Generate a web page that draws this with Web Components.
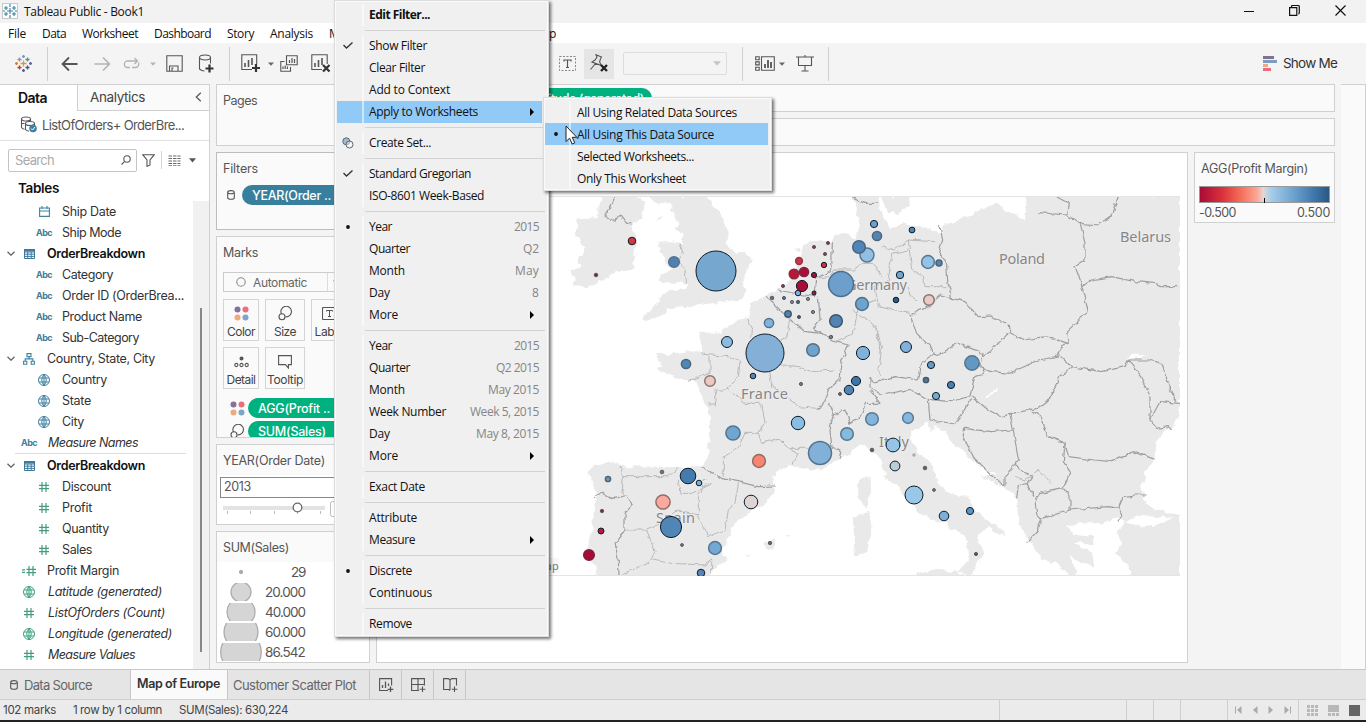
<!DOCTYPE html>
<html lang="en">
<head>
<meta charset="utf-8">
<title>Tableau Public - Book1</title>
<style>
html,body{margin:0;padding:0;width:1366px;height:722px;overflow:hidden;background:#f4f4f4}
</style>
</head>
<body>
<tableau-app></tableau-app>
<script>
const S='fill="none" stroke="#555" stroke-width="1.1"';
const ICONS={
app:[16,16,`<rect x=".5" y=".5" width="15" height="15" fill="#fbfdfe" stroke="#c9c9c9"/><path d="M8 5v6M5 8h6M4 3v4M2 5h4M12 3v4M10 5h4M4 9v4M2 11h4M12 9v4M10 11h4M8 1v3M8 12v3M1 8h2M13 8h2" stroke="#3f7f9f" stroke-width="1.1"/>`],
logo:[17,17,`<g stroke-width="1.3"><path d="M8.500 5.500v6M5.500 8.500h6" stroke="#eb912b"/><path d="M4.500 2.500v4M2.500 4.500h4" stroke="#7f95b5"/><path d="M12.500 2.500v4M10.500 4.500h4" stroke="#59879b"/><path d="M4.500 10.500v4M2.500 12.500h4" stroke="#b5364a"/><path d="M12.500 10.500v4M10.500 12.500h4" stroke="#3b5a86"/><path d="M8.500 0v3M7 1.500h3" stroke="#7b9ac0"/><path d="M8.500 14v3M7 15.500h3" stroke="#5a5b8c"/><path d="M1.500 7v3M0 8.500h3" stroke="#e8762d"/><path d="M15.500 7v3M14 8.500h3" stroke="#5b6591"/></g>`],
back:[18,16,`<path d="M16.500 8H2M8 1.500 1.500 8 8 14.500" fill="none" stroke="#555" stroke-width="1.8"/>`],
fwd:[18,16,`<path d="M1.500 8H16M10 1.500 16.500 8 10 14.500" fill="none" stroke="#b2b2b2" stroke-width="1.6"/>`],
redo:[20,14,`<path d="M8 10.500H4.500a3.500 3.500 0 0 1 0-6.500H15M12.500 1l3 3-3 3M16.500 5.500a3.500 3.500 0 0 1-3 5H10" fill="none" stroke="#b2b2b2" stroke-width="1.300"/>`],
tri:[6,4,`<path d="M0 .5h6L3 3.800Z" fill="#666"/>`],
trig:[6,4,`<path d="M0 .5h6L3 3.800Z" fill="#b5b5b5"/>`],
tril:[8,5,`<path d="M0 .3h8L4 4.700Z" fill="#c6c6c6"/>`],
trib:[7,5,`<path d="M0 .3h7L3.500 4.500Z" fill="#555"/>`],
save:[17,17,`<g ${S}><path d="M.8.8h15.400v15.400H.8Z"/><path d="M3.500 16v-5h8.500v5M6 16v-3h1.500"/></g>`],
dbplus:[17,19,`<g ${S}><ellipse cx="7" cy="3.500" rx="5.500" ry="2.500"/><path d="M1.500 3.500v11.500q2 2 5 2M12.500 3.500v6"/></g><path d="M11.500 10.500v8M7.500 14.500h8" stroke="#333" stroke-width="2.200"/>`],
sheetplus:[20,19,`<g ${S}><path d="M11 15.500H.8V.8h14.900V10"/></g><path d="M4 13V9M7.500 13V6M11 11V4" stroke="#555" stroke-width="1.600"/><path d="M15 10v8M11 14h8" stroke="#333" stroke-width="2.200"/>`],
dup:[18,17,`<g ${S}><path d="M6.500.8h10.700v9H6.500ZM4.500 6.500H.8v9.700h9.700V12"/></g><path d="M9.500 8V5M12 8V3M14.500 8V4M3 14v-2.500M5.200 14v-3.500M7.400 14v-2.500" stroke="#555" stroke-width="1.200"/>`],
clear:[20,19,`<g ${S}><path d="M11 15.500H.8V.8h15.400V10"/></g><path d="M4 13V9M7.500 13V6M11 11V4" stroke="#555" stroke-width="1.600"/><path d="m12 11 6.500 6.500M18.500 11 12 17.500" stroke="#333" stroke-width="2.200"/>`],
tbox:[17,15,`<rect x=".5" y=".5" width="16" height="14" fill="none" stroke="#888" stroke-dasharray="2 1.500"/><path d="M5 5.500V4h7v1.500M8.500 4v7.500M7 11.500h3" fill="none" stroke="#555" stroke-width="1.200"/>`],
pin:[20,19,`<path d="M7 .8 12.500 3l-1 1.600L10.600 8l1.800 3.600L3 8l3-2L8 3.200ZM6.500 9.500 1.500 15.500" ${S} stroke-width="1.300"/><path d="m12 11 6 6M18 11l-6 6" stroke="#222" stroke-width="2.400"/>`],
showc:[20,15,`<g ${S}><path d="M6.500.7h12.800v13.500H6.500ZM.7.700h3.500v3H.7ZM.7 5.900h3.500v3H.7ZM.7 11.200h3.500v3H.7Z"/></g><path d="M10 12V8M13 12V4M16 12V6" stroke="#555" stroke-width="1.800"/>`],
present:[18,17,`<g ${S} stroke-width="1.300"><path d="M0 2h18M9 0v2M2.500 2v8.500h13V2M9 10.500V16M5.500 16h7"/></g>`],
showme:[14,16,`<path d="M0 0h11v3H0Z" fill="#82718f"/><path d="M0 4h14v3H0Z" fill="#7c9cc3"/><path d="M0 8h5v3H0Z" fill="#eeaa84"/><path d="M0 12h8v3H0Z" fill="#ea6d7d"/>`],
ds:[18,17,`<g ${S} stroke="#777"><ellipse cx="6" cy="3" rx="4.500" ry="2"/><path d="M1.500 3v8.500q1 1.500 3 1.700M10.500 3v2M1.500 7.500h3"/><ellipse cx="10" cy="7.500" rx="4.500" ry="2"/><path d="M5.500 7.500v6q1 1.500 3.500 1.700M14.500 7.500v2"/></g><circle cx="13" cy="12.500" r="3.800" fill="#3b82a6"/><path d="m11 12.500 1.500 1.500 2.500-3" fill="none" stroke="#fff"/>`],
search:[10,10,`<circle cx="6" cy="4" r="3.200" ${S}/><path d="M3.700 6.300.5 9.500" ${S} stroke-width="1.500"/>`],
funnel:[13,13,`<path d="M.7.700h11.600L8 6v5L5 12.400V6Z" ${S}/>`],
list:[13,11,`<path d="M.5 1h12M.5 3.500h12M.5 6h12M.5 8.500h12M.5 10.800h12" stroke="#666" stroke-dasharray="3.500 1"/>`],
chev:[8,5,`<path d="m.5.7 3.500 3.500L7.500.7" fill="none" stroke="#666" stroke-width="1.300"/>`],
chevl:[7,10,`<path d="M5.800.7 1.300 5l4.500 4.300" fill="none" stroke="#555" stroke-width="1.200"/>`],
cal:[11,11,`<path d="M.6 2h9.800v8.400H.6ZM.6 5h9.800M3 0v3M8 0v3" fill="none" stroke="#3f82a2" stroke-width="1.100"/>`],
tbl:[11,10,`<path d="M.5.500h10v9H.5ZM.5 3h10M.5 5.200h10M.5 7.400h10M3.700 3v6.500M7.200 3v6.500" fill="none" stroke="#3f7a9c"/><path d="M0 0h11v2.500H0Z" fill="#3f7a9c"/>`],
hier:[12,12,`<path d="M4 .6h4v3H4ZM.6 8.300h3.200v3H.6ZM8.200 8.300h3.200v3H8.200ZM6 3.600v2.300M2.200 8.300V5.900h7.600v2.400" fill="none" stroke="#3f82a2" stroke-width="1.100"/>`],
globe:[12,12,`<path d="M.5 6a5.500 5.500 0 1 0 11 0A5.500 5.500 0 1 0 .5 6M1 4h10M1 8h10M6 .5v11M6 .5Q1.500 6 6 11.500M6 .5Q10.500 6 6 11.500" fill="none" stroke="#3f82a2"/>`],
globeg:[12,12,`<path d="M.5 6a5.500 5.500 0 1 0 11 0A5.500 5.500 0 1 0 .5 6M1 4h10M1 8h10M6 .5v11M6 .5Q1.500 6 6 11.500M6 .5Q10.500 6 6 11.500" fill="none" stroke="#3da37e"/>`],
hash:[10,10,`<path d="M3 0v10M7 0v10M0 3.300h10M0 6.700h10" stroke="#439d7c" stroke-width="1.200"/>`],
eqhash:[14,10,`<path d="M7 0v10M11 0v10M4.500 3.300h9.500M4.500 6.700h9.500M0 3.800h3M0 6.300h3" stroke="#439d7c" stroke-width="1.200"/>`],
cyl:[8,10,`<path d="M.7 2.200a3.300 1.600 0 1 0 6.600 0 3.300 1.600 0 1 0-6.600 0v5.600q0 1.500 3.300 1.500t3.300-1.500V2.200" ${S}/>`],
ring:[10,10,`<circle cx="5" cy="5" r="4.200" fill="none" stroke="#888" stroke-width="1.100"/>`],
dots:[15,15,`<circle cx="3.500" cy="3.500" r="3" fill="#85719b"/><circle cx="11.500" cy="3.500" r="3" fill="#ee6d7c"/><circle cx="3.500" cy="11.500" r="3" fill="#eeaa7c"/><circle cx="11.500" cy="11.500" r="3" fill="#7ca5c7"/>`],
size:[15,15,`<g ${S} stroke="#777"><path d="M3.500 8a5.300 5.300 0 1 1 4 2.800"/><circle cx="4" cy="10.700" r="3"/></g>`],
label:[15,13,`<rect x=".5" y=".5" width="14" height="12" rx="1" ${S}/><path d="M4.500 4.500V3.500h6v1M7.500 3.500v6M6 9.500h3" fill="none" stroke="#555"/>`],
detail:[15,12,`<circle cx="7.500" cy="2.500" r="2" fill="#555"/><g ${S} stroke-width=".9"><circle cx="2.300" cy="9" r="1.600"/><circle cx="7.500" cy="9" r="1.600"/><circle cx="12.700" cy="9" r="1.600"/></g>`],
tip:[14,14,`<path d="M.6.600h12.800v9h-3V13L7.500 9.600H.6Z" ${S}/>`],
check:[10,7,`<path d="m.5 3 3 3L9.500.500" fill="none" stroke="#333" stroke-width="1.300"/>`],
bullet:[4,4,`<circle cx="2" cy="2" r="1.900" fill="#111"/>`],
sets:[12,12,`<circle cx="4.300" cy="4.300" r="3.500" fill="#a7b8c8" stroke="#566a7c"/><circle cx="7.500" cy="7.500" r="3.500" fill="#fff" fill-opacity=".45" stroke="#566a7c"/>`],
sub:[4,8,`<path d="M0 0v8l4-4Z" fill="#000"/>`],
nsheet:[15,14,`<path d="M9 12.500H.6V.600h12v7" ${S}/><path d="M3.500 10V7M6.500 10V3.500M9.500 8V5.500M11.500 8.500v5.500M8.700 11.300h5.600" stroke="#555" stroke-width="1.300"/>`],
ndash:[15,14,`<path d="M8 12.500H.6V.600h12.800v7M.6 6.500h12.800M7 .6v11.900M11.500 8.500v5.500M8.700 11.300h5.600" ${S} stroke-width="1.300"/>`],
nstory:[15,14,`<path d="M7 12.500 6 11.500H.6V.6h4.900L7 2.200 8.500.6h5v7M7 2.200v9.500M11.500 8.500v5.500M8.700 11.300h5.600" ${S} stroke-width="1.300"/>`],
first:[7,8,`<path d="M.5.500v7" stroke="#aaa"/><path d="M6.500 0v8L2 4Z" fill="#aaa"/>`],
prev:[5,8,`<path d="M4.500 0v8L0 4Z" fill="#aaa"/>`],
next:[5,8,`<path d="M.5 0v8L5 4Z" fill="#aaa"/>`],
last:[7,8,`<path d="M6.500.5v7" stroke="#aaa"/><path d="M.5 0v8L5 4Z" fill="#aaa"/>`],
v1:[11,11,`<path d="M0 1.500h11M0 5.500h11M0 9.500h11" stroke="#b8b8b8" stroke-width="3" stroke-dasharray="3 1"/>`],
v2:[11,11,`<path d="M0 0h11v7H0Z" fill="#b8b8b8"/><path d="M0 9.500h11" stroke="#b8b8b8" stroke-width="3" stroke-dasharray="3 1"/>`],
v3:[11,11,`<path d="M0 0h11v11H0Z" fill="#666"/>`],
min:[10,10,`<path d="M0 5.500h10" stroke="#111"/>`],
max:[11,11,`<path d="M.6 2.600h7.200v7.800H.6ZM2.500 2.500V1.500q0-1 1-1h5.500q1.300 0 1.300 1.300V8q0 .8-1 .8" fill="none" stroke="#111" stroke-width="1.200"/>`],
close:[11,11,`<path d="m.5.500 10 10M10.500.500l-10 10" stroke="#111" stroke-width="1.200"/>`],
cursor:[13,20,`<path d="M1 1v15.500l3.600-3.300 2.600 5.800 2.600-1.200-2.600-5.500h4.600Z" fill="#fff" stroke="#222"/>`]
};
class Base extends HTMLElement{
  connectedCallback(){
    if(this.shadowRoot)return;
    const t=document.createElement('template');
    t.innerHTML=`<style>*{box-sizing:border-box}:host{box-sizing:border-box}${this.css||''}</style>${this.html()}`;
    this.attachShadow({mode:'open'}).append(t.content.cloneNode(true));
  }
}
const I=n=>`<ui-icon name="${n}"></ui-icon>`;
const T=(w,s)=>`<fit-text w="${w}">${s}</fit-text>`;

class UiIcon extends Base{
  get css(){return ':host{display:inline-flex;flex:none}svg{display:block}'}
  html(){const [w,h,b]=ICONS[this.getAttribute('name')];return `<svg width="${w}" height="${h}" viewBox="0 0 ${w} ${h}">${b}</svg>`}
}
/* Text whose tracking is tuned so that the run takes a given width. */
class FitText extends Base{
  get css(){return ':host{display:inline-block;flex:none;white-space:pre}'}
  html(){return '<slot></slot>'}
  connectedCallback(){
    super.connectedCallback();
    const w=+this.getAttribute('w'),n=this.textContent.length,r=this.getBoundingClientRect().width;
    if(w&&r&&n)this.style.letterSpacing=((w-r)/n).toFixed(3)+'px';
  }
}
/* A slot of fixed width in a bar, with its content centred. */
class BarItem extends Base{
  get css(){return `:host{display:flex;align-items:center;justify-content:center;height:100%;flex:none;width:${this.getAttribute('w')}px}`}
  html(){return '<slot></slot>'}
}
class TitleBar extends Base{
  get css(){return `:host{display:flex;align-items:center;height:23px;background:#f2f2f2;font:12px "Open Sans","Noto Sans",sans-serif;color:#111;padding:0 20px 2px 2px}.t{margin-left:6px;padding-top:1px}.g{flex:1}ui-icon+ui-icon{margin-left:35px}`}
  html(){return `${I('app')}<span class="t">${T(120,'Tableau Public - Book1')}</span><span class="g"></span>${I('min')}${I('max')}${I('close')}`}
}
class MenuBar extends Base{
  get css(){return `:host{display:flex;align-items:center;height:20px;background:#fff;font:12px "Open Sans","Noto Sans",sans-serif;color:#111;padding:0 0 0 8px}span{width:var(--w);flex:none}`}
  html(){return [['File',18,34],['Data',24,40],['Worksheet',56,72],['Dashboard',57,73],['Story',27,43],['Analysis',43,59],['Map',24,202],['Help',25,30]].map(([t,w,p])=>`<span style="--w:${p}px">${T(w,t)}</span>`).join('')}
}
class ToolBar extends Base{
  get css(){return `:host{display:flex;align-items:center;height:41px;background:#f4f4f4;font:13.5px Inter,sans-serif;color:#333}
  i{width:1px;height:34px;background:#d0d0d0;flex:none}.pin{width:30px;height:30px;background:#e5e5e5;display:flex;align-items:center;justify-content:center;flex:none}
  .combo{width:104px;height:23px;border:1px solid #ddd;border-radius:2px;background:#f4f4f4;margin:0 15px 0 9px;display:flex;align-items:center;justify-content:flex-end;padding-right:5px;flex:none}.g{flex:1}.sm{margin:0 29px 0 6px;padding-bottom:2px}`}
  html(){const b=(w,n='')=>`<bar-item w="${w}">${n&&I(n)}</bar-item>`;
  return b(47,'logo')+'<i></i>'+b(43,'back')+b(22,'fwd')+b(38,'redo')+b(4,'trig')+b(38,'save')+b(27,'dbplus')+b(9)+'<i></i>'+b(41,'sheetplus')+b(2)+`<bar-item w="0" style="margin:0 2px 0 -2px">${I('tri')}</bar-item>`+b(32,'dup')+b(31,'clear')+b(215)+b(33,'tbox')
  +`<span class="pin">${I('pin')}</span><span class="combo">${I('tril')}</span><i></i>`+b(44,'showc')+b(0)+`<bar-item w="0" style="margin-left:-5px">${I('tri')}</bar-item>`+b(46,'present')+`<i></i><span class="g"></span>${I('showme')}<span class="sm">${T(54,'Show Me')}</span>`}
}
class TreeRow extends Base{
  get css(){const l=+this.getAttribute('level');return `:host{display:flex;align-items:center;height:21px;color:#333;font-size:12.5px}
  .c{width:22px;display:flex;justify-content:center;flex:none}.i{width:${l==2?30:14}px;margin-left:${l==2?7:0}px;display:flex;justify-content:center;flex:none;font:700 9px Inter,sans-serif;color:#407c99}.t{margin-left:${l==2?3:this.hasAttribute('it')?12:11}px}
  :host([bold]){font-weight:600;color:#111}:host([it]) .t{font-style:italic}`}
  html(){const ic=this.getAttribute('icon');return `<span class="c">${this.hasAttribute('open')?I('chev'):''}</span><span class="i">${ic=='abc'?T(16,'Abc'):I(ic)}</span><span class="t">${T(this.getAttribute('w'),this.getAttribute('label'))}</span>`}
}
class DataPane extends Base{
  get css(){return `:host{display:flex;flex-direction:column;width:210px;background:#fff;border-right:1px solid #d0d0d0;border-top:1px solid #d0d0d0;font:12.5px Inter,sans-serif;color:#444;overflow:hidden;flex:none}
  .tabs{display:flex;height:26px;flex:none}.d{width:77px;padding:0 0 2px 18px;font-weight:600;font-size:14px;color:#111;display:flex;align-items:center}.a{flex:1;border-left:1px solid #d0d0d0;border-bottom:1px solid #d0d0d0;background:#fafafa;display:flex;align-items:center;justify-content:space-between;padding:0 7px 1px 12px;font-size:13.5px}
  .src{height:30px;display:flex;align-items:center;gap:4px;padding:0 0 2px 20px;border-bottom:1px solid #e0e0e0;flex:none;font-size:13px;color:#555}
  .find{height:38px;display:flex;align-items:center;padding-left:8px;flex:none}.box{width:129px;height:23px;border:1px solid #c4c4c4;border-radius:2px;display:flex;align-items:center;justify-content:space-between;padding:0 5px 0 6px;margin-right:5px;color:#aaa;font-size:13px}.find i{width:1px;height:18px;background:#d4d4d4;margin:0 6px}.find ui-icon:last-child{margin-left:8px}
  .h{height:20px;padding:0 0 2px 18px;font-weight:600;font-size:13.5px;color:#111;display:flex;align-items:center;flex:none}
  .tree{flex:1;display:flex;min-height:0;margin-top:2px}.rows{width:193px}.sep{height:1px;margin:0 7px 1px 15px;background:#ddd}.bar{flex:1;background:#f1f1f1;padding:107px 0 17px 7px}.bar b{display:block;width:2px;height:100%;background:#888}`}
  html(){const R=(level,icon,label,w,x='')=>`<tree-row level="${level}" icon="${icon}" label="${label}" w="${w}" ${x}></tree-row>`;
  return `<div class="tabs"><div class="d">${T(29,'Data')}</div><div class="a">${T(55,'Analytics')}${I('chevl')}</div></div>
  <div class="src">${I('ds')}${T(142,'ListOfOrders+ OrderBre...')}</div>
  <div class="find"><div class="box">${T(39,'Search')}${I('search')}</div>${I('funnel')}<i></i>${I('list')}${I('trib')}</div>
  <div class="h">${T(41,'Tables')}</div>
  <div class="tree"><div class="rows">${R(2,'cal','Ship Date',54)+R(2,'abc','Ship Mode',59)+R(1,'tbl','OrderBreakdown',98,'bold open')+R(2,'abc','Category',51)+R(2,'abc','Order ID (OrderBrea...',122)+R(2,'abc','Product Name',80)+R(2,'abc','Sub-Category',77)+R(1,'hier','Country, State, City',108,'open')+R(2,'globe','Country',45)+R(2,'globe','State',29)+R(2,'globe','City',22)+R(1,'abc','Measure Names',90,'it')}<div class="sep"></div>${R(1,'tbl','OrderBreakdown',98,'bold open')+R(2,'hash','Discount',49)+R(2,'hash','Profit',30)+R(2,'hash','Quantity',47)+R(2,'hash','Sales',30)+R(1,'eqhash','Profit Margin',72)+R(1,'globeg','Latitude (generated)',114,'it')+R(1,'hash','ListOfOrders (Count)',117,'it')+R(1,'globeg','Longitude (generated)',124,'it')+R(1,'hash','Measure Values',87,'it')}</div><div class="bar"><b></b></div></div>`}
}
class ShelfCard extends Base{
  get css(){return `:host{display:block;background:#fafafa;border:1px solid #d0d0d0;overflow:hidden;font:12.5px Inter,sans-serif;color:#555;flex:none}.h{height:30px;padding:0 0 0 6px;display:flex;align-items:center}`}
  html(){const t=this.getAttribute('label');return (t?`<div class="h">${T(this.getAttribute('w'),t)}</div>`:'')+'<slot></slot>'}
}
class DataPill extends Base{
  get css(){return `:host{display:flex;align-items:center;height:20px;width:150px;border-radius:10px;background:var(--pill);color:#fff;font:500 12.5px Inter,sans-serif;padding-left:10px;flex:none}`}
  html(){return T(this.getAttribute('w'),this.textContent)}
}
class MarkButton extends Base{
  get css(){return `:host{display:flex;flex-direction:column;align-items:center;width:${this.getAttribute('w')}px;height:42px;border:1px solid #d4d4d4;background:#fafafa;font:12px Inter,sans-serif;color:#444;flex:none}.i{height:26px;display:flex;align-items:center;padding-top:1px}fit-text{line-height:12px}`}
  html(){return `<span class="i">${I(this.getAttribute('icon'))}</span>${T(this.getAttribute('tw'),this.getAttribute('label'))}`}
}
class CardColumn extends Base{
  get css(){return `:host{display:flex;flex-direction:column;gap:7px;width:154px;flex:none}
  .f{border-color:#bdbdbd}.row{display:flex;align-items:center;padding:2px 0 0 10px;gap:7px}
  .auto{display:flex;align-items:center;margin:5px 0 7px 6px;height:20px;width:139px;border:1px solid #ccc;padding-left:12px;color:#666;font-size:12px}.auto fit-text{margin-left:7px}.auto i{width:1px;height:100%;background:#ddd;margin:0 5px 0 20px}
  .bt{display:flex;gap:6px;padding:0 0 6px 6px}.p{display:flex;align-items:center;gap:3px;padding:3px 0 0 13px}
  .w{background:#fff;height:100%}.sel{height:21px;width:150px;border:1px solid #888;margin:0 0 0 3px;padding:0 0 2px 3px;display:flex;align-items:center;position:relative;top:2px}
  svg{display:block}.lg{display:flex;height:20px;align-items:center;padding-left:3px}.lg span{width:43px;text-align:right;font-size:13.5px}.ls{background:#fff;height:102px}`}
  html(){
    const L=(r,t,w)=>`<div class="lg"><svg width="42" height="18" viewBox="0 0 42 18"><circle cx="21" cy="9" r="${r}" fill="${r<3?'#aaa':'#d5d5d5'}" stroke="#adadad" stroke-width="1.300"/></svg><span>${T(w,t)}</span></div>`;
    return `<shelf-card label="Pages" w="34" style="height:62px"></shelf-card>
    <shelf-card class="f" label="Filters" w="35" style="height:78px;margin-top:-1px"><div class="row">${I('cyl')}<data-pill w="79" style="--pill:#387f9e">YEAR(Order ..</data-pill></div></shelf-card>
    <shelf-card label="Marks" w="35" style="height:202px;margin-top:-1px"><div class="auto">${I('ring')}${T(54,'Automatic')}<i></i>${I('tri')}</div>
    <div class="bt"><mark-button w="36" icon="dots" label="Color" tw="28"></mark-button><mark-button w="40" icon="size" label="Size" tw="22"></mark-button><mark-button w="36" icon="label" label="Label" tw="29"></mark-button></div>
    <div class="bt"><mark-button w="36" icon="detail" label="Detail" tw="29"></mark-button><mark-button w="40" icon="tip" label="Tooltip" tw="36"></mark-button></div>
    <div class="p">${I('dots')}<data-pill w="72" style="--pill:#00b180">AGG(Profit ..</data-pill></div><div class="p">${I('size')}<data-pill w="68" style="--pill:#00b180">SUM(Sales)</data-pill></div></shelf-card>
    <shelf-card label="YEAR(Order Date)" w="102" style="height:81px;margin-top:-1px"><div class="w"><div class="sel">${T(27,'2013')}</div><svg width="150" height="26" viewBox="0 0 150 26"><path d="M6 12h102" stroke="#e3e3e3" stroke-width="4"/><path d="M10.500 15v3M33.500 15v3M57.500 15v3M80.500 15v3M103.500 15v3" stroke="#bbb"/><circle cx="80.500" cy="11.500" r="4.300" fill="#fff" stroke="#666" stroke-width="1.300"/><rect x="113.500" y="5.500" width="30" height="15" rx="2" fill="#fff" stroke="#bbb"/></svg></div></shelf-card>
    <shelf-card label="SUM(Sales)" w="66" style="height:132px;margin-top:-1px"><div class="ls">${L(1.500,'29',14)+L(10,'20.000',40)+L(14,'40.000',40)+L(17,'60.000',40)+L(20.300,'86.542',40)}</div></shelf-card>`}
}
class EuropeMap extends Base{
  get css(){return `:host{display:block}svg{display:block}text{font-family:"Noto Sans","Open Sans",sans-serif;font-size:14.500px;fill:#868686;paint-order:stroke;stroke:#efefef;stroke-width:1.500px}`}
  html(){
    const N='#7e8a94';
    const b=[[716,271,20,'#76a7cf'],[765,353,19,'#84b0d7'],[841,284,12.500,'#6c9fcb','#4c6f8f'],[820,453,11.500,'#81b0d8','#56748c'],[671,527,10.600,'#4f86b6'],[674,262,5.300,'#4d81b3','#56708a'],[632,241,3.800,'#ce3642'],[596,275,1.800,'#8a1b38'],[727,342,5.500,'#8abbe1'],[769,323,4.600,'#83b2db','#55738e'],[686,364,4.600,'#4f86b6','#4d6479'],[710,381,5.300,'#ebc8c2','#8b7673'],[813,350,6.300,'#6fa2cd','#54718b'],[753,376,2.800,'#5686b3'],[801,384,1.600,'#777'],[836,321,6.300,'#5183b3','#3d556c'],[788,314,3.200,'#4d82b1','#435b72'],[799,317,1.600,'#46566a'],[831,337,1.700,'#6f7e89'],[813,312,1.600,'#708392'],[808,299,1.600,N],[798,302,1.700,'#42627e'],[792,302,1.600,N],[784,298,1.600,'#516e88'],[772,298,1.800,'#5a7286'],[798,293,2.800,'#7cb0dc'],[802,286,5.600,'#a80f38'],[814,293,2,'#a21e3b'],[783,286,1.600,'#9e2844'],[794,274,4.800,'#b81838','#8e2940'],[804,272,4.600,'#a90e36','#7c2440'],[799,261,3.400,'#cf3444','#8e3946'],[814,275,2.600,'#9d1538'],[824,265,2.700,'#c53543'],[825,254,1.600,'#933148'],[828,243,1.600,'#933148'],[814,247,1.600,'#933148'],[867,255,7,'#91c0e4','#577891'],[859,247,6.300,'#4f85b7','#486582'],[874,224,3.600,'#69a3d0'],[877,236,4.600,'#5584b2','#4e6780'],[912,230,2.900,'#4c86b4'],[928,262,6.400,'#94c3e7','#577891'],[939,263,3,'#5386b5','#4d6379'],[900,275,3.700,'#70a6d0'],[896,300,2.800,'#2c5c88'],[929,300,5.300,'#ebcac5','#847674'],[862,304,6.400,'#6ea3cc','#4c6f8f'],[863,353,6.600,'#7fb1da'],[906,347,5.500,'#82b1dc'],[931,365,3.600,'#669ac4'],[972,363,7.200,'#6498c4','#55738c'],[926,380,2.600,'#4c799f','#44596c'],[951,385,3.600,'#4681b3'],[936,396,3.600,'#77aacf'],[856,381,4.600,'#3c75a8'],[849,390,4.700,'#4e83b3'],[840,394,1.500,'#5a6975'],[872,419,6.300,'#83b5dc','#5a7a93'],[908,418,5.400,'#86b8df','#5a7a93'],[893,445,6.900,'#94c4e6'],[872,450,1.800,'#55616b'],[895,466,4.900,'#b9ced7'],[914,455,1,'#ccc','#aaa'],[925,468,1.800,'#5d6670'],[934,490,1.400,'#777'],[914,495,9,'#99c7e8'],[944,516,4.800,'#7bafd8'],[970,511,3.600,'#5795c4'],[976,554,1.600,'#555'],[733,433,7.100,'#6fa6d1','#55738b'],[798,423,6.700,'#8abde3'],[847,434,6.300,'#85badf','#57768d'],[759,461,6.400,'#fa8472','#956a61'],[751,502,6.800,'#ded5d3'],[688,476,7.800,'#437bae'],[699,483,2.800,'#78afdc'],[662,472,1.800,'#667988'],[608,479,2.600,'#7297b1','#52677a'],[663,502,7.100,'#f9a99e','#936d69'],[602,511,1.700,'#99213d'],[601,531,3,'#b71b39'],[589,555,5.300,'#a60c35','#792139'],[682,545,1.400,'#63717d'],[715,548,6.400,'#73a8d4','#567690'],[770,543,1.700,'#506e82'],[701,573,3.800,'#5588b4']];
    const land=`M945 18H925L935 70 945 105 930 150 905 128 870 135 862 155 825 150 790 160 775 165 768 200 755 228 735 268 700 300 665 320 618 340 612 385 555 405 525 428 485 428 462 420 475 480 440 485 400 492 332 492 350 530 330 535 400 562 455 580 470 620 490 655 495 690 488 800 478 828 400 832 225 828 190 813 130 838 150 915 142 1020 118 1090 152 1130 145 1170H505L495 1140 548 1115 530 1080 570 1000 690 915 682 860 740 826 800 845 850 830 900 795 945 765 960 762 980 785 1005 810 1020 860 1075 910 1125 970 1195 1000 1265 1040 1270 1110 1235 1150 1275 1155 1318 1090 1298 1040 1325 1010 1378 1042 1372 1020 1285 960 1265 920 1215 912 1178 880 1165 830 1100 760 1098 725 1150 695 1160 740 1215 790 1275 840 1375 890 1415 920 1420 1000 1465 1070 1505 1130 1545 1170H1905V18H1445L1440 90 1390 65 1355 38 1275 75 1195 105 1190 130 1145 112 1075 103 1035 112 1005 60 995 18Z
    M170 18H285L298 50 288 92 262 102 272 150 266 235 230 242 185 265 130 292 88 285 80 240 110 232 95 215 125 170 103 150 92 130 98 85 155 82Z
    M310 18H400L385 32 330 38ZM385 18H485L525 75 552 130 545 160 570 188 600 185 622 210 600 250 590 270 605 300 590 328 500 340 430 350 370 355 330 388 300 396 290 385 335 345 350 310 420 295 430 275 385 282 340 272 345 255 378 240 350 195 338 155 375 152 410 160 415 128 385 122 400 100 378 60ZM335 92 347 78 345 90ZM935 885 970 855 976 905 965 955 945 940ZM920 985 972 965 980 1010 970 1085 930 1098ZM655 1058 690 1048 685 1075 665 1075ZM720 1036 735 1036 730 1042ZM600 1098 616 1090 610 1098ZM1115 1150 1180 1140 1255 1145 1260 1170H1110ZM1005 18H1100L1090 45 1060 75 1030 65ZM755 180 765 172 768 190Z`;
    return `<svg width="631" height="380" viewBox="549 196 631 380"><defs>
    <filter id="r" x="-5%" y="-5%" width="110%" height="110%" color-interpolation-filters="sRGB"><feTurbulence type="fractalNoise" baseFrequency=".12" numOctaves="3" seed="4"/><feDisplacementMap in="SourceGraphic" scale="7" xChannelSelector="R" yChannelSelector="G"/></filter>
    <filter id="b" x="-5%" y="-5%" width="110%" height="110%" color-interpolation-filters="sRGB"><feTurbulence type="fractalNoise" baseFrequency=".14" numOctaves="2" seed="9"/><feDisplacementMap in="SourceGraphic" scale="5" xChannelSelector="R" yChannelSelector="G"/></filter></defs>
    <path fill="#fff" d="M549 196h631v380H549z"/>
    <g filter="url(#r)"><g transform="translate(545 190) scale(.33333)"><path d="${land}" fill="#e9e9e9"/>
    <path fill="#fff" d="M1905 680 1885 708 1850 732 1833 755 1832 810 1802 840 1788 890 1798 930 1835 965 1905 970ZM1565 1010 1610 1000 1680 1000 1720 985 1735 1000 1715 1030 1735 1060 1715 1090 1755 1140 1760 1170H1545L1480 1110 1530 1115 1580 1160 1600 1150 1570 1100 1600 1110 1650 1130 1640 1090 1590 1060 1620 1055 1650 1070 1640 1040 1590 1035ZM1735 995 1790 975 1830 980 1890 985 1850 1000 1790 1010ZM1320 618 1355 598 1362 602 1325 622ZM1085 110 1110 75 1130 60 1090 60ZM1150 730 1170 710 1200 720 1215 750 1290 820 1350 855 1300 855 1210 800ZM1745 500 1780 490 1800 500 1750 505Z"/></g></g>
    <g filter="url(#b)"><g transform="translate(545 190) scale(.33333)" fill="none" stroke="#9e9e9e" stroke-width="3.600" stroke-linejoin="round">
    <path d="M210 20 195 55 180 75 212 95 225 75 245 100 262 98M660 318 690 345 730 385 780 425 830 430 870 455 910 465M695 300 760 312 810 320 815 265 860 240 862 155M820 320 825 390 805 415 830 430M910 465 888 520 882 570 850 600 830 650 815 655M925 25 960 40 995 40
    M1185 110 1193 150 1180 190 1205 220 1208 270 1220 325 1190 315 1150 350 1095 375 1115 430 1160 475 1165 490 1180 495 1235 460 1305 485 1310 500 1345 475 1390 430M1220 325 1260 335 1300 380 1340 378 1390 405 1395 428 1440 450 1500 440 1570 460 1565 425 1630 365 1610 290 1608 275 1590 230 1620 210 1620 160 1605 100 1565 75 1480 68M1565 75 1570 40 1535 20M1605 100 1660 105 1695 85 1710 45 1720 20M1610 290 1640 270 1700 260 1770 275 1830 280 1860 290 1900 290
    M1310 500 1305 530 1340 545 1395 550 1480 510 1540 498 1550 470 1570 460M1545 498 1580 530 1670 545 1740 530 1750 510 1810 510 1850 520 1870 580 1875 600M1165 490 1130 520 1120 570 1050 560 985 580 975 560 975 590 1010 615 1095 598 1150 628 1220 635 1275 618 1290 560 1315 550 1312 535M1280 618 1330 660 1370 680 1400 670 1480 655 1510 630 1545 560 1580 530M1750 510 1790 560 1815 620 1815 690 1835 715 1870 710 1880 720M1815 690 1845 635 1905 640M1870 580 1880 610 1895 635
    M1150 630 1155 690 1230 702 1250 675 1280 625M1395 672 1405 720 1340 725 1255 715 1255 740 1290 810 1380 890 1380 860 1420 810 1415 780 1405 720M1455 655 1485 680 1510 740 1560 760 1570 800 1650 810 1700 815 1765 785 1830 808M1560 760 1555 815 1575 845 1555 895 1575 920 1575 960 1690 950 1720 955 1735 920 1770 915 1805 915M1555 895 1485 910 1470 935 1475 970 1490 985 1575 960M1405 825 1460 860 1445 880 1420 885 1415 925M1445 880 1470 920M1490 985 1480 1020 1445 1058M1720 955 1730 975 1715 995
    M975 600 1005 640 965 640 945 680 915 700 900 660 865 675 850 640M865 675 855 720 860 770 890 785 885 810M470 830 530 865 580 875 640 890 690 888M150 920 170 910 210 925 245 915 262 945 240 970 240 1020 210 1060 220 1110 222 1155"/>
    <g stroke="#b8b8b8" stroke-width="3"><path d="M405 160 415 190 400 210 420 240 425 280M470 492 550 500 585 515 580 560 550 590 545 600M495 500 495 550 430 572M605 390 622 420 620 440M735 385 725 440 690 460 670 510 680 590M670 520 760 530 800 545 865 540M545 600 510 600 515 645 490 645M545 595 600 640 650 640 660 700 640 730 650 760 700 745 730 775 785 775M680 580 730 625 760 650 815 655M640 730 600 730 580 770 535 800 535 860M730 775 760 790 740 825M225 828 235 860 370 860M235 860 230 920M400 835 370 860 M400 870 405 910 440 910 500 880M480 870 460 920 460 980 490 1040 540 1020 550 960 570 940 580 880M245 1020 300 1020 360 990 400 960 460 975M305 1020 330 1085 310 1120 235 1150M320 1110 380 1120 480 1125 500 1110 500 1150
    M815 265 850 260 870 240 925 240 950 220 985 220 1010 260M920 360 970 390 1000 430 1005 490M870 455 925 430 940 350 990 330M1010 170 1050 180 1090 150 1170 155M1090 150 1100 240 1135 260 1140 290 1210 290M1090 180 1040 190 1030 270 990 290 1000 350 1095 370M1090 290 1095 320 1120 330M990 410 1010 470 1000 560M1410 860 1440 870 1480 840 1520 880"/></g></g></g>
    <path d="M549 196.500h631M549 575.500h631" stroke="#e4e4e4"/>
    <text x="741" y="399" textLength="47">France</text><text x="846" y="290" textLength="61">Germany</text><text x="999" y="264" textLength="46">Poland</text><text x="1120" y="242" textLength="51">Belarus</text><text x="879" y="447" textLength="30">Italy</text><text x="656" y="523" textLength="39">Spain</text>
    ${b.map(([x,y,r,f,s])=>`<circle cx="${x}" cy="${y}" r="${r}" fill="${f}" stroke="${s||(r<2?'#5a5a62':'#0f1c28')}" stroke-width="${s?1.500:1}"/>`).join('')}</svg>`}
}
class WorkSheet extends Base{
  get css(){return `:host{display:flex;flex-direction:column;gap:7px;width:959px;flex:none;font:11px "Noto Sans",sans-serif}
  .low{display:flex;gap:6px;align-items:flex-start}.viz{width:812px;height:511px;background:#fff;border:1px solid #d0d0d0;padding:43px 0 0 172px;position:relative}
  .cr{position:absolute;left:82px;top:405px;width:100px;text-align:right;color:#777;background:#f7f7f7}
  .lg{width:141px;height:71px}.gr{height:17px;margin:3px 4px 0 4px;border:1px solid #999;background:linear-gradient(90deg,#a90c38,#d9303b 17%,#f36754 30%,#fba594 44%,#e3d6d2 49%,#a5cde9 55%,#74a9d2 70%,#3f78ac 88%,#2a5783);position:relative}.gr:after{content:"";position:absolute;left:64px;top:11px;width:1px;height:5px;background:#000}.n{display:flex;justify-content:space-between;margin:0 4px 0 4px;font-size:12.500px;line-height:19px}
  data-pill{margin:3px 0 0 125px;justify-content:flex-end;padding:0 8px 0 0}`}
  html(){return `<shelf-card style="height:28px"><data-pill w="124" style="--pill:#00b180">Longitude (generated)</data-pill></shelf-card><shelf-card style="height:28px;margin-top:-1px"></shelf-card>
  <div class="low" style="margin-top:-1px"><div class="viz"><europe-map></europe-map><span class="cr">${T(98,'© OpenStreetMap')}</span></div>
  <shelf-card class="lg" label="AGG(Profit Margin)" w="107"><div class="gr"></div><div class="n">${T(37,'-0.500')}${T(33,'0.500')}</div></shelf-card></div>`}
}
class SheetTabs extends Base{
  get css(){return `:host{display:flex;height:30px;background:#e5e5e5;border-top:1px solid #c8c8c8;font:13px Inter,sans-serif;color:#666;flex:none}div{display:flex;align-items:center;border-right:1px solid #c8c8c8;justify-content:center;flex:none}.ds{width:131px;justify-content:flex-start;padding-left:10px;gap:6px}.on{width:97px;background:#fafafa;font-weight:600;font-size:12.500px;color:#333;padding:0 1px 2px 0}.b{width:32px;padding-left:1px}`}
  html(){return `<div class="ds">${I('cyl')}${T(68,'Data Source')}</div><div class="on">${T(83,'Map of Europe')}</div><div style="width:142px;padding-right:8px">${T(123,'Customer Scatter Plot')}</div><div class="b">${I('nsheet')}</div><div class="b">${I('ndash')}</div><div class="b">${I('nstory')}</div>`}
}
class StatusBar extends Base{
  get css(){return `:host{display:flex;align-items:center;height:23px;background:#ebebeb;border-top:1px solid #cfcfcf;border-bottom:2px solid #222;font:11.500px Inter,sans-serif;color:#444;padding-left:3px;flex:none}span{flex:1;display:flex;gap:17px}i{width:1px;height:100%;background:#cfcfcf;flex:none}div{display:flex;align-items:center;justify-content:center;flex:none}`}
  html(){return `<span>${T(53,'102 marks')+T(89,'1 row by 1 column')+T(109,'SUM(Sales): 630,224')}</span><i></i><div style="width:126px"></div><i></i><div style="width:26px"></div><i></i><div style="width:26px"></div><i></i><div style="width:46px"></div><i></i><div style="width:70px;gap:10.500px">${I('first')+I('prev')+I('next')+I('last')}</div><i></i><div style="width:67px;gap:10px;padding-left:1px">${I('v1')+I('v2')+I('v3')}</div>`}
}
class MenuEntry extends Base{
  get css(){const s=this.hasAttribute('small');return `:host{display:flex;align-items:center;height:22px;color:#111;flex:none}:host([on]){background:#91c9f7}:host([bold]){font-weight:700}
  .g{width:${s?26:27}px;height:100%;display:flex;align-items:center;justify-content:center;border-right:2px solid rgba(255,255,255,.55);padding-right:${s?2:4}px;flex:none}.t{flex:1;margin-left:${s?6:5}px}.r{color:#858585;margin-right:3px}.a{margin-right:8px;display:flex}`}
  html(){const a=n=>this.getAttribute(n);return `<span class="g">${a('mark')?I(a('mark')):''}</span><span class="t">${T(a('w'),a('label'))}</span>${a('hint')?`<span class="r">${T(a('hw'),a('hint'))}</span>`:''}${this.hasAttribute('sub')?`<span class="a">${I('sub')}</span>`:''}`}
}
class PopMenu extends Base{
  get css(){return `:host{display:flex;flex-direction:column;position:absolute;background:#f0f0f0;border:1px solid #dcdcdc;box-shadow:inset 0 0 0 1px #fafafa,2px 2px 3px rgba(0,0,0,.55);font:12px "Open Sans","Noto Sans",sans-serif}`}
  html(){return '<slot></slot>'}
}
class TableauApp extends Base{
  get css(){return `:host{display:flex;flex-direction:column;width:1366px;height:722px;position:relative;overflow:hidden;background:#f4f4f4}
  .body{display:flex;height:585px;flex:none}card-column{margin:0 6px}.strip{width:24.500px;margin-left:6px;background:#fafafa;border:1px solid #d0d0d0;border-left:0;border-bottom:0}
  .ctx{left:334px;top:0;width:215px;height:637px;padding:3px 6px 0 2px;z-index:2}.sm{left:543px;top:97px;width:229px;height:94px;padding:3px 3px 0 1px;z-index:3}
  .sep{height:9px;display:flex;align-items:center;padding-left:28px;margin-right:-3px;flex:none}.sep:before{content:"";height:1px;flex:1;background:#d2d2d2}
  menu-entry{--lift:1px}
  .cur{position:absolute;left:565px;top:125px;z-index:4}`}
  html(){
    const E=(l,w,x='')=>`<menu-entry label="${l}" w="${w}" ${x}></menu-entry>`,H=(l,w,h,hw,x='')=>E(l,w,`hint="${h}" hw="${hw}" ${x}`),D='<div class="sep"></div>';
    return `<title-bar></title-bar><menu-bar></menu-bar><tool-bar></tool-bar>
    <div class="body"><data-pane></data-pane><card-column></card-column><work-sheet></work-sheet><div class="strip"></div></div>
    <sheet-tabs></sheet-tabs><status-bar></status-bar>
    <pop-menu class="ctx" style="padding-top:2.500px">${E('Edit Filter...',61,'bold')+D+E('Show Filter',58,'mark="check"')+E('Clear Filter',56)+E('Add to Context',81)+E('Apply to Worksheets',109,'on sub')+D+E('Create Set...',62,'mark="sets"')+D+E('Standard Gregorian',102,'mark="check"')+E('ISO-8601 Week-Based',115)+D+H('Year',23,'2015',25,'mark="bullet"')+H('Quarter',41,'Q2',16)+H('Month',36,'May',24)+H('Day',21,'8',7)+E('More',29,'sub')+D+H('Year',23,'2015',25)+H('Quarter',41,'Q2 2015',43)+H('Month',36,'May 2015',51)+H('Week Number',77,'Week 5, 2015',69)+H('Day',21,'May 8, 2015',63)+E('More',29,'sub')+D+E('Exact Date',56)+D+E('Attribute',48)+E('Measure',46,'sub')+D+E('Discrete',43,'mark="bullet"')+E('Continuous',63)+D+E('Remove',43)}</pop-menu>
    <pop-menu class="sm">${E('All Using Related Data Sources',160,'small')+E('All Using This Data Source',137,'small on mark="bullet"')+E('Selected Worksheets...',117,'small')+E('Only This Worksheet',109,'small')}</pop-menu>
    <span class="cur">${I('cursor')}</span>`}
}
for(const [n,c] of Object.entries({'tableau-app':TableauApp,'title-bar':TitleBar,'menu-bar':MenuBar,'bar-item':BarItem,'tool-bar':ToolBar,'data-pane':DataPane,'tree-row':TreeRow,'card-column':CardColumn,'work-sheet':WorkSheet,'shelf-card':ShelfCard,'data-pill':DataPill,'mark-button':MarkButton,'europe-map':EuropeMap,'sheet-tabs':SheetTabs,'status-bar':StatusBar,'pop-menu':PopMenu,'menu-entry':MenuEntry,'ui-icon':UiIcon,'fit-text':FitText}))customElements.define(n,c);
</script>
</body>
</html>
